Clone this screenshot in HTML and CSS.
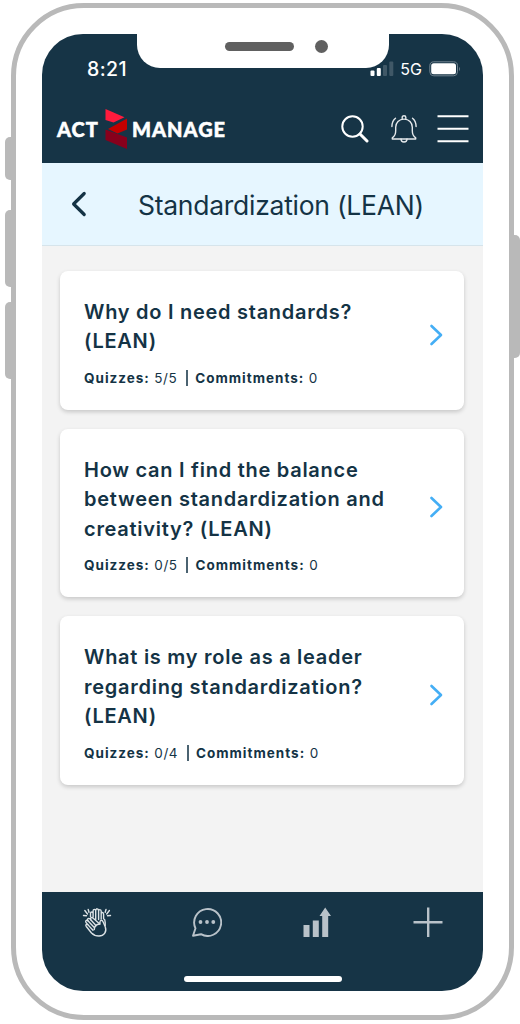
FILE: index.html
```
<!DOCTYPE html>
<html lang="en">
<head>
  <meta charset="utf-8">
  <title>Act2Manage - Standardization (LEAN)</title>
  <link rel="stylesheet" href="styles.css">
</head>
<body>
<div class="phone">
  <span class="key key-mute"></span>
  <span class="key key-up"></span>
  <span class="key key-down"></span>
  <span class="key key-power"></span>

  <div class="screen">
    <div class="notch"><span class="speaker"></span><span class="camera"></span></div>

    <header class="top">
      <div class="status">
        <span class="time">8:21</span>
        <svg class="signal" width="24" height="16" viewBox="0 0 24 16">
          <rect x="0.5" y="9.5" width="4" height="5.5" rx="1" fill="#fff"/>
          <rect x="6.8" y="7" width="4" height="8" rx="1" fill="#fff"/>
          <rect x="13" y="4" width="4" height="11" rx="1" fill="#405867"/>
          <rect x="19.3" y="0.5" width="4" height="14.5" rx="1" fill="#405867"/>
        </svg>
        <span class="net">5G</span>
        <svg class="battery" width="32" height="16" viewBox="0 0 32 16">
          <rect x="0.8" y="0.8" width="27.7" height="14" rx="4" fill="none" stroke="#71838f"/>
          <rect x="2.2" y="2.3" width="24.8" height="11" rx="2.5" fill="#fff"/>
          <path d="M30 6v4c1.2-.5 1.2-3.500 0-4z" fill="#71838f"/>
        </svg>
      </div>
      <div class="bar">
        <div class="logo">
          <span class="logo-text act">ACT</span>
          <svg width="23" height="40" viewBox="0 0 23 40">
            <path d="M.5 0L19.500 8.200 8.500 13.400.5 11z" fill="#ff1b3d"/>
            <path d="M22 9.500V20.500L12.500 24.500 3 20z" fill="#c40000"/>
            <path d="M.5 20.500L22 28.500V40L.5 31z" fill="#87001c"/>
          </svg>
          <span class="logo-text manage">MANAGE</span>
        </div>
        <svg class="search" width="28" height="28" viewBox="0 0 28 28" fill="none" stroke="#fff" stroke-linecap="round">
          <circle cx="11.500" cy="11.500" r="10.200" stroke-width="2"/>
          <path d="M19 19l7 7" stroke-width="3"/>
        </svg>
        <svg class="bell" width="26" height="28" viewBox="0 0 26 28" fill="none" stroke="#e4e8eb" stroke-width="1.400" stroke-linecap="round" stroke-linejoin="round">
          <path d="M1.300 24h23.400v-1.200c-2.200-1.300-3.400-3-3.400-7v-3.500c0-4.800-3.300-8.200-8.300-8.200S4.700 7.500 4.700 12.300v3.500c0 4-1.200 5.700-3.400 7z"/>
          <path d="M11.200 4V2.200c0-2 3.600-2 3.600 0V4M10 24c0 4 6 4 6 0M4.500 3.300C2.300 5 1 7.500.9 11.500M21.500 3.300c2.200 1.700 3.500 4.200 3.600 8.200"/>
        </svg>
        <svg class="menu" width="32" height="28" viewBox="0 0 32 28" stroke="#fff" stroke-width="2">
          <path d="M.5 1.300h31M.5 13.800h31M.5 26.200h31"/>
        </svg>
      </div>
    </header>

    <div class="heading">
      <svg width="16" height="26" viewBox="0 0 16 26" fill="none" stroke="#143345" stroke-width="3.200" stroke-linecap="round" stroke-linejoin="round">
        <path d="M13.200 2.500L2.600 13 13.200 23.500"/>
      </svg>
      <h1>Standardization (LEAN)</h1>
    </div>

    <main class="list">
      <div class="card">
        <div class="card-body">
          <h2>Why do I need standards?<br>(LEAN)</h2>
          <p class="meta"><b>Quizzes:</b> 5/5<span class="sep"></span><b>Commitments:</b> 0</p>
        </div>
        <svg class="go" width="14" height="22" viewBox="0 0 14 22"><path d="M2.500 2l9.500 9-9.500 9"/></svg>
      </div>
      <div class="card">
        <div class="card-body">
          <h2>How can I find the balance<br>between standardization and<br>creativity? (LEAN)</h2>
          <p class="meta"><b>Quizzes:</b> 0/5<span class="sep"></span><b>Commitments:</b> 0</p>
        </div>
        <svg class="go" width="14" height="22" viewBox="0 0 14 22"><path d="M2.500 2l9.500 9-9.500 9"/></svg>
      </div>
      <div class="card">
        <div class="card-body">
          <h2>What is my role as a leader<br>regarding standardization?<br>(LEAN)</h2>
          <p class="meta"><b>Quizzes:</b> 0/4<span class="sep"></span><b>Commitments:</b> 0</p>
        </div>
        <svg class="go" width="14" height="22" viewBox="0 0 14 22"><path d="M2.500 2l9.500 9-9.500 9"/></svg>
      </div>
    </main>

    <footer class="bottom">
      <nav class="tabs">
        <!-- clapping hands -->
        <svg width="30" height="30" viewBox="0 0 30 30" fill="none" stroke="#dce2e5" stroke-width="1.400" stroke-linecap="round" stroke-linejoin="round">
          <path d="M9.500 26L4.300 19.500c-1.200-1.600.3-2.900 1.500-1.900L4 15.500c-1-1.800.6-2.900 1.900-1.700-1.200-2 .8-3.200 2.200-1.700l.6.600c-.8-1.900 1.200-2.900 2.500-1.500l6.600 5.800c.3-1.500-.2-3.300 1-3.700 1.500-.3 2.200.8 2.500 2l2 4.700c1.800 5-1.500 9-6.300 9-3.300 0-5.500-1-7.500-3z"/>
          <path d="M12.300 22.500c0-3.500 2.500-5.200 5.500-5.500M5.800 17.600l5.200 5.700M5.900 13.800l6.600 7M8.700 12.700l5.500 6"/>
          <path d="M8.500 9.800V6.500c0-2 2.600-2 2.600 0V4c0-2.200 2.600-2.200 2.600 0 0-3 2.900-2.800 2.900 0 0-2 2.600-1.800 2.600.2v2.500c0-1.800 2.400-1.500 2.400.5v4.500c1.400.7 1.600 2 1.600 3.800v3M11.100 5v5M13.700 4v8.500M16.600 4v8.500M19.200 6v6"/>
          <path d="M6.200 2.500l.8 2.800M2.800 3.500L5.500 7M1.500 8.500l3 .3M24 2.500l-.8 2.800M27.400 3.500L24.700 7M28.500 8.500l-3 .3"/>
        </svg>
        <!-- chat -->
        <svg width="30" height="30" viewBox="0 0 30 30" fill="none" stroke="#b9c2c9" stroke-width="1.900" stroke-linejoin="round">
          <path d="M1 28.800l2.500-7.500A13.500 13.500 0 1 1 9 27.200z"/>
          <g fill="#b9c2c9" stroke="none"><circle cx="8.500" cy="15" r="1.900"/><circle cx="15" cy="15" r="1.900"/><circle cx="21.300" cy="15" r="1.900"/></g>
        </svg>
        <!-- stats -->
        <svg width="30" height="30" viewBox="0 0 30 30" fill="#b9c2c9">
          <path d="M.5 18h6v12h-6zM9.800 13.500h6V30h-6zM19.200 30V9h-2.700L22.200.5 28 9h-2.800v21z"/>
        </svg>
        <!-- add -->
        <svg width="30" height="30" viewBox="0 0 30 30" stroke="#b9c2c9" stroke-width="2.400">
          <path d="M.5 15.200h29M15.200 .5v29.500"/>
        </svg>
      </nav>
      <div class="home"></div>
    </footer>
  </div>
</div>
</body>
</html>
```
FILE: styles.css
```
* {
  box-sizing: border-box;
}
body {
  margin: 0;
  height: 1024px;
  padding: 3px 6px 0 11px;
  background: #fff;
  color: #143345;
  font-family: Inter, "Liberation Sans", sans-serif;
  overflow: hidden;
}
svg {
  display: block;
  flex: none;
}
.phone {
  position: relative;
  width: 503px;
  height: 1017px;
  padding: 26px;
  border: 5px solid #b9b9b9;
  border-radius: 73px;
}
.screen {
  position: relative;
  display: flex;
  flex-direction: column;
  width: 441px;
  height: 957px;
  border-radius: 41px;
  overflow: hidden;
  background: #f3f3f3;
}

/* side keys, they stick out of the frame */
.key {
  position: absolute;
  left: -11px;
  width: 7px;
  background: #b9b9b9;
  border-radius: 5px 0 0 5px;
}
.key-mute {
  top: 129px;
  height: 43px;
}
.key-up {
  top: 202px;
  height: 77px;
}
.key-down {
  top: 294px;
  height: 77px;
}
.key-power {
  top: 227px;
  left: auto;
  right: -11px;
  height: 123px;
  border-radius: 0 5px 5px 0;
}
.notch {
  position: absolute;
  top: 0;
  left: 95px;
  width: 252px;
  height: 34px;
  display: flex;
  align-items: center;
  padding: 0 0 10px 88px;
  gap: 21px;
  background: #fff;
  border-radius: 0 0 23px 23px;
}
.speaker {
  width: 69px;
  height: 9px;
  border-radius: 5px;
  background: #606060;
}
.camera {
  width: 13px;
  height: 13px;
  border-radius: 50%;
  background: #606060;
}

.top {
  height: 129px;
  background: #163446;
  color: #fff;
}
.status {
  display: flex;
  align-items: center;
  height: 36px;
  margin-top: 17px;
  padding: 0 22px 0 45px;
}
.time {
  font-size: 19.500px;
  font-weight: 500;
  letter-spacing: 0.4px;
}
.signal {
  margin-left: auto;
}
.net {
  margin: 0 7px 0 6px;
  font-size: 16px;
}
.bar {
  display: flex;
  align-items: center;
  height: 84px;
  padding: 0 14px;
}
.logo {
  display: flex;
  align-items: center;
  margin-right: auto;
}
.logo-text {
  font-family: Lato, sans-serif;
  font-weight: 900;
  font-size: 20px;
  letter-spacing: 1px;
  -webkit-text-stroke: 0.5px #fff;
}
.act {
  width: 48px;
  margin-left: 1px;
}
.manage {
  margin-left: 4px;
}
.search {
  margin-right: 22px;
}
.bell {
  margin-right: 20px;
}

.heading {
  display: flex;
  align-items: center;
  height: 83px;
  padding-left: 29px;
  background: #e6f6ff;
  border-bottom: 1px solid #d6e4eb;
}
h1 {
  margin: 2px 0 0 51px;
  font-size: 26.500px;
  font-weight: 400;
  letter-spacing: -0.27px;
  white-space: nowrap;
}

.list {
  flex: 1;
  display: flex;
  flex-direction: column;
  gap: 19px;
  padding: 24.500px 19px 0 18px;
}
.card {
  display: flex;
  align-items: center;
  padding: 27px 21px 22px 24px;
  background: #fff;
  border-radius: 8px;
  box-shadow: 0 2px 4px rgba(0, 0, 0, 0.18);
}
.card-body {
  flex: 1;
  white-space: nowrap;
}
h2 {
  margin: 0;
  font-size: 20px;
  font-weight: 570;
  line-height: 29.500px;
  letter-spacing: 0.73px;
}
.meta {
  display: flex;
  align-items: center;
  margin: 11px 0 0;
  font-size: 13.500px;
  line-height: 20px;
  letter-spacing: 0.5px;
}
.meta b {
  margin-right: 4.500px;
  font-weight: 650;
  letter-spacing: 1px;
}
.sep {
  width: 2px;
  height: 16px;
  margin: 0 7px 0 9px;
  background: #4b6371;
}
.go {
  margin-bottom: 16px;
}
.go path {
  fill: none;
  stroke: #44aef5;
  stroke-width: 2.600;
  stroke-linecap: round;
  stroke-linejoin: round;
}

.bottom {
  height: 99px;
  background: #163446;
}
.tabs {
  display: flex;
  justify-content: space-between;
  padding: 15px 40px 0;
}
.home {
  width: 158px;
  height: 6px;
  margin: 39px auto 0;
  border-radius: 3px;
  background: #fff;
}
```
